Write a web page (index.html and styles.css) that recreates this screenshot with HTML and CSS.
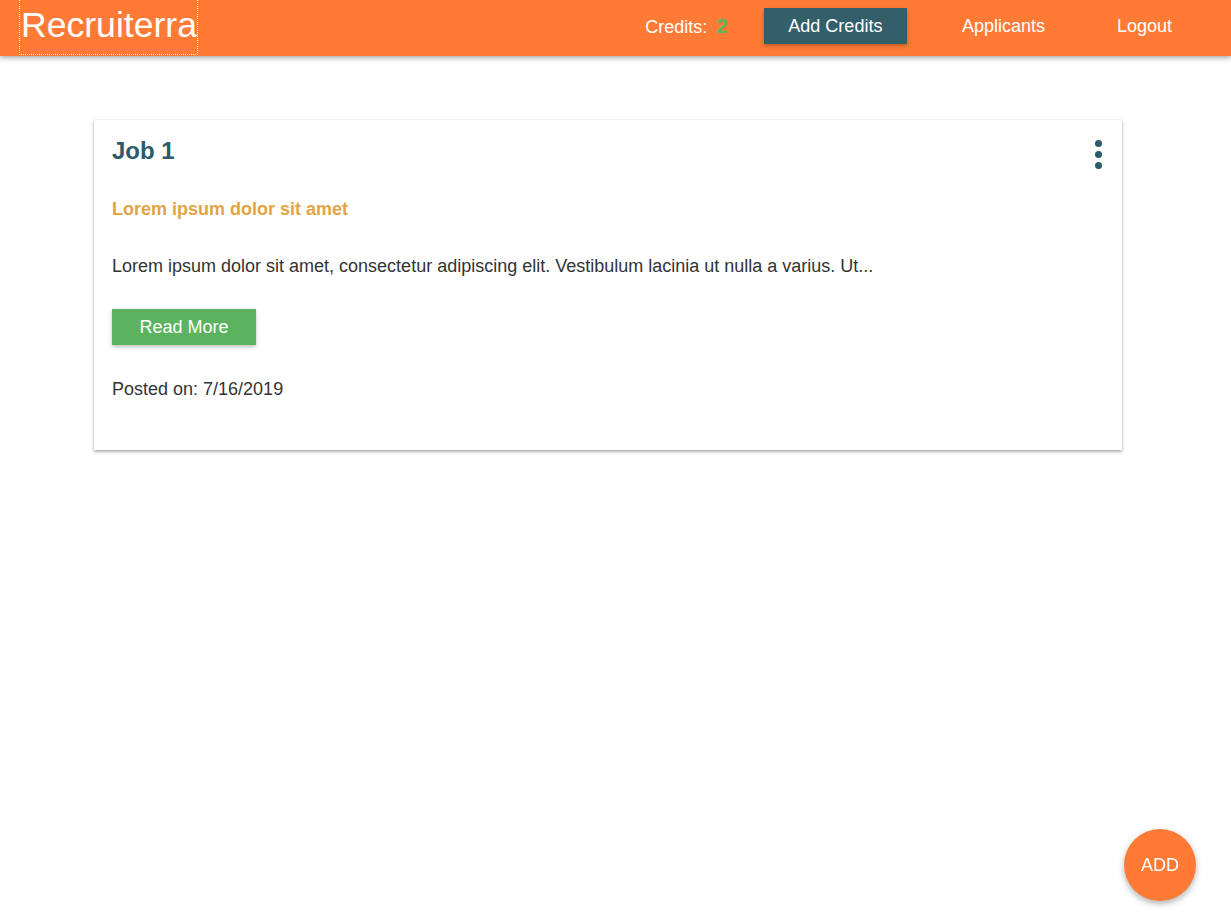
FILE: index.html
```html
<!DOCTYPE html>
<html lang="en">
<head>
<meta charset="utf-8">
<title>Recruiterra</title>
<link rel="stylesheet" href="styles.css">
</head>
<body>
<header class="topbar">
  <a class="logo" href="#">Recruiterra</a>
  <nav class="nav">
    <span class="credits">Credits: <b class="credits-num">2</b></span>
    <a class="btn-add-credits" href="#">Add Credits</a>
    <a class="nav-link" href="#">Applicants</a>
    <a class="nav-link" href="#">Logout</a>
  </nav>
</header>
<main class="content">
  <article class="card">
    <div class="card-head">
      <h2 class="job-title">Job 1</h2>
      <button class="kebab" aria-label="More options">
        <span class="dot"></span><span class="dot"></span><span class="dot"></span>
      </button>
    </div>
    <h3 class="job-sub">Lorem ipsum dolor sit amet</h3>
    <p class="job-desc">Lorem ipsum dolor sit amet, consectetur adipiscing elit. Vestibulum lacinia ut nulla a varius. Ut...</p>
    <div class="btn-row"><a class="btn-read" href="#">Read More</a></div>
    <p class="posted">Posted on: 7/16/2019</p>
  </article>
</main>
<button class="fab">ADD</button>
</body>
</html>
```

FILE: styles.css
```css
* { box-sizing: border-box; }
html, body { margin: 0; padding: 0; }
html { height: 100%; }
body {
  min-height: 100%;
  font-family: "Liberation Sans", Arial, sans-serif;
  background: #fff;
  color: #333;
}
a { text-decoration: none; }

.topbar {
  height: 56px;
  background: #ff7b35;
  display: flex;
  align-items: flex-start;
  justify-content: space-between;
  box-shadow: 0 2px 5px rgba(0,0,0,0.35);
  position: relative;
  z-index: 2;
}
.logo {
  display: block;
  margin-left: 20px;
  height: 54px;
  padding: 0 0 4px 1px;
  line-height: 50px;
  font-size: 35.6px;
  color: #fff;
  outline: 1px dotted #fff;
}
.nav {
  display: flex;
  align-items: center;
  height: 52px;
  padding-right: 23px;
  font-size: 18px;
  color: #fff;
}
.credits { margin-right: 36px; }
.credits-num {
  color: #5cb85c;
  font-size: 21px;
  margin-left: 4px;
}
.btn-add-credits {
  display: block;
  height: 36px;
  line-height: 36px;
  width: 143px;
  text-align: center;
  background: #335f6a;
  color: #fff;
  box-shadow: 0 2px 4px rgba(0,0,0,0.25);
  margin-right: 19px;
}
.nav-link {
  color: #fff;
  padding: 0 36px;
}

.content {
  padding: 64px 109px 40px 94px;
}
.card {
  background: #fff;
  box-shadow: 0 2px 3px rgba(0,0,0,0.3), 0 0 2px rgba(0,0,0,0.12);
  padding: 17px 18px 50px;
}
.card-head {
  display: flex;
  justify-content: space-between;
  align-items: flex-start;
}
.job-title {
  margin: 0;
  font-size: 24px;
  font-weight: bold;
  color: #2e5b6b;
  line-height: 28px;
}
.kebab {
  border: 0;
  background: none;
  padding: 0;
  margin: 3px 2px 0 0;
  display: flex;
  flex-direction: column;
  gap: 4px;
  cursor: pointer;
}
.dot {
  width: 7px;
  height: 7px;
  border-radius: 50%;
  background: #2e5b6b;
}
.job-sub {
  margin: 30px 0 0;
  font-size: 18px;
  font-weight: bold;
  color: #e3a445;
  line-height: 21px;
}
.job-desc {
  margin: 36px 0 0;
  font-size: 18px;
  line-height: 21px;
  color: #333;
}
.btn-row {
  display: flex;
  margin-top: 32px;
}
.btn-read {
  display: block;
  width: 144px;
  height: 36px;
  line-height: 36px;
  text-align: center;
  background: #5cb35f;
  color: #fff;
  font-size: 18px;
  box-shadow: 0 2px 4px rgba(0,0,0,0.25);
}
.posted {
  margin: 34px 0 0;
  font-size: 18px;
  line-height: 21px;
  color: #333;
}

.fab {
  position: fixed;
  right: 35px;
  bottom: 20px;
  width: 72px;
  height: 72px;
  border-radius: 50%;
  border: 0;
  background: #ff7b35;
  color: #fff;
  font-family: "Liberation Sans", Arial, sans-serif;
  font-size: 18px;
  box-shadow: 0 3px 6px rgba(0,0,0,0.3);
  cursor: pointer;
}
```
